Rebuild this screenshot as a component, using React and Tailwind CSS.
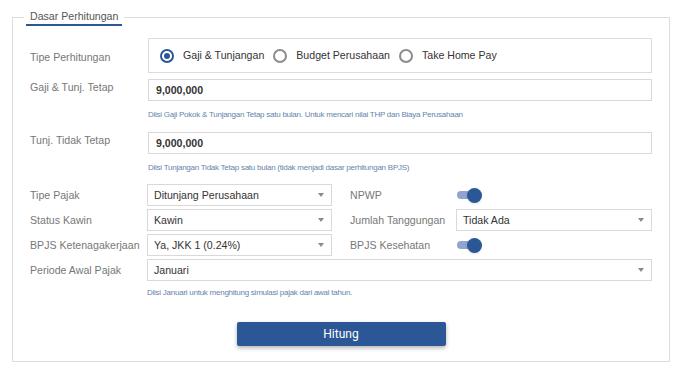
import React from "react"

function Radio({ checked, label }) {
  return (
    <span className="flex items-center">
      <span
        className={`w-[14px] h-[14px] rounded-full border-2 flex items-center justify-center ${
          checked ? "border-[#2b5797]" : "border-[#8c8c8c]"
        }`}
      >
        {checked && <span className="w-[6px] h-[6px] rounded-full bg-[#2b5797]" />}
      </span>
      <span className="ml-[9px] text-[#333]">{label}</span>
    </span>
  )
}

function Select({ value, className = "" }) {
  return (
    <div className={`h-[22px] border border-[#d9d9d9] bg-white flex items-center justify-between pl-[6px] pr-[7px] text-[#333] ${className}`}>
      <span>{value}</span>
      <span className="w-0 h-0 border-l-[3px] border-r-[3px] border-t-[4px] border-l-transparent border-r-transparent border-t-[#8a8a8a]" />
    </div>
  )
}

function Toggle() {
  return (
    <div className="relative w-[25px] h-[15px] flex items-center">
      <div className="w-[22px] h-[8px] rounded-full bg-[#8fa5cd]" />
      <div className="absolute right-0 top-0 w-[15px] h-[15px] rounded-full bg-[#2b5797] shadow-sm" />
    </div>
  )
}

function Help({ children, className = "" }) {
  return (
    <div className={`text-[8px] leading-[10px] tracking-[-0.25px] text-[#6684ab] ${className}`}>
      {children}
    </div>
  )
}

export default function App() {
  return (
    <div className="w-[683px] h-[376px] bg-white font-['Liberation_Sans',Arial,sans-serif] text-[10.6px] leading-[15px] pt-[9px] pl-[12px]">
      <fieldset className="w-[658px] border border-[#dcdcdc]">
        <legend className="ml-[11px] px-[2px]">
          <span className="block border-b-2 border-[#2b5797] px-[4px] text-[#555] leading-[15px]">
            Dasar Perhitungan
          </span>
        </legend>

        <div className="px-[17px] pb-[15px]">
          <div className="flex items-center mt-[12px]">
            <div className="w-[118px] text-[#777] pt-[3px]">Tipe Perhitungan</div>
            <div className="flex-1 h-[35px] border border-[#dcdcdc] flex items-center pl-[11px] gap-[9px]">
              <Radio checked label="Gaji & Tunjangan" />
              <Radio label="Budget Perusahaan" />
              <Radio label="Take Home Pay" />
            </div>
          </div>

          <div className="flex items-start mt-[6px]">
            <div className="w-[118px] text-[#777] mt-[1px]">Gaji &amp; Tunj. Tetap</div>
            <div className="flex-1 h-[22px] border border-[#d9d9d9] flex items-center pl-[7px] font-bold text-[#333]">
              9,000,000
            </div>
          </div>
          <Help className="ml-[118px] mt-[9px]">
            Diisi Gaji Pokok &amp; Tunjangan Tetap satu bulan. Untuk mencari nilai THP dan Biaya Perusahaan
          </Help>

          <div className="flex items-start mt-[12px]">
            <div className="w-[118px] text-[#777] mt-[1px]">Tunj. Tidak Tetap</div>
            <div className="flex-1 h-[22px] border border-[#d9d9d9] flex items-center pl-[7px] font-bold text-[#333]">
              9,000,000
            </div>
          </div>
          <Help className="ml-[118px] mt-[9px]">
            Diisi Tunjangan Tidak Tetap satu bulan (tidak menjadi dasar perhitungan BPJS)
          </Help>

          <div className="grid grid-cols-[117px_185px_124px_1fr] gap-y-[3px] items-center mt-[11px] text-[#777]">
            <div>Tipe Pajak</div>
            <Select value="Ditunjang Perusahaan" />
            <div className="pl-[18px]">NPWP</div>
            <div className="pl-[1px]"><Toggle /></div>

            <div>Status Kawin</div>
            <Select value="Kawin" />
            <div className="pl-[18px]">Jumlah Tanggungan</div>
            <Select value="Tidak Ada" />

            <div>BPJS Ketenagakerjaan</div>
            <Select value="Ya, JKK 1 (0.24%)" />
            <div className="pl-[18px]">BPJS Kesehatan</div>
            <div className="pl-[1px]"><Toggle /></div>

            <div>Periode Awal Pajak</div>
            <Select value="Januari" className="col-span-3" />
          </div>
          <Help className="ml-[117px] mt-[7px]">
            Diisi Januari untuk menghitung simulasi pajak dari awal tahun.
          </Help>

          <button className="block mx-auto mt-[24px] w-[209px] h-[24px] bg-[#2b5797] rounded-[2px] shadow-[0_2px_4px_rgba(0,0,0,0.3)] text-white text-[12px] font-['Roboto',sans-serif]">
            Hitung
          </button>
        </div>
      </fieldset>
    </div>
  )
}
